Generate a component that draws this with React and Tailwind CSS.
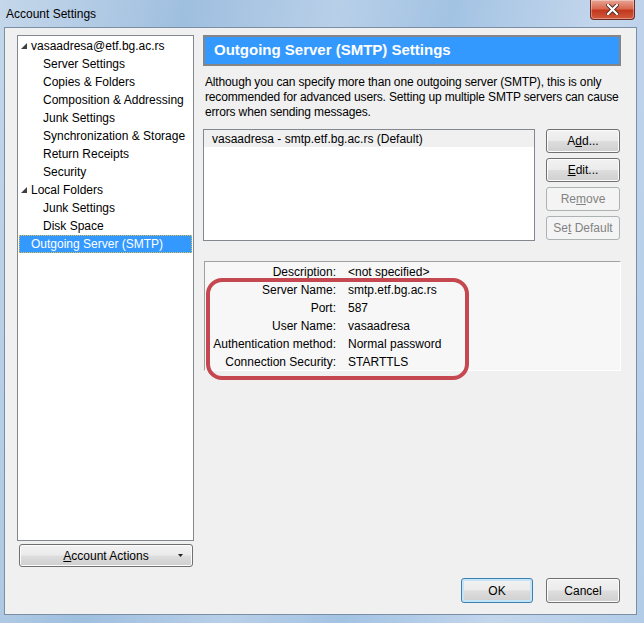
import React from "react";

const font = { fontFamily: '"Liberation Sans", Arial, sans-serif' };

const Tri = () => (
  <svg width="6" height="6" viewBox="0 0 6 6" className="shrink-0">
    <polygon points="6,0 6,6 0,6" fill="#404040" />
  </svg>
);

const TreeRow = ({ level, label, selected }) => (
  <div
    className={
      "h-[18px] flex items-center text-[12px] leading-none " +
      (selected
        ? "bg-[#3399ff] text-white outline-1 outline-dotted outline-[#e0c050] -outline-offset-1"
        : "text-black")
    }
  >
    {level === 0 && (
      <div className="w-[12px] pl-[2px] flex items-center">
        <Tri />
      </div>
    )}
    {level === 2 && <div className="w-[12px]" />}
    {level === 1 && <div className="w-[24px]" />}
    <span>{label}</span>
  </div>
);

const WinButton = ({ children, disabled, className = "" }) => (
  <div
    className={
      "flex items-center justify-center rounded-[3px] border text-[12px] " +
      (disabled
        ? "border-[#adb2b5] bg-[#f4f4f4] text-[#838383] "
        : "border-[#707070] bg-[linear-gradient(#f2f2f2_0%,#ebebeb_48%,#dddddd_52%,#cfcfcf_100%)] text-black shadow-[inset_0_0_0_1px_#fcfcfc] ") +
      className
    }
  >
    {children}
  </div>
);

const tree = [
  [0, "vasaadresa@etf.bg.ac.rs"],
  [1, "Server Settings"],
  [1, "Copies & Folders"],
  [1, "Composition & Addressing"],
  [1, "Junk Settings"],
  [1, "Synchronization & Storage"],
  [1, "Return Receipts"],
  [1, "Security"],
  [0, "Local Folders"],
  [1, "Junk Settings"],
  [1, "Disk Space"],
  [2, "Outgoing Server (SMTP)", true],
];

const details = [
  ["Description:", "<not specified>"],
  ["Server Name:", "smtp.etf.bg.ac.rs"],
  ["Port:", "587"],
  ["User Name:", "vasaadresa"],
  ["Authentication method:", "Normal password"],
  ["Connection Security:", "STARTTLS"],
];

export default function App() {
  return (
    <div
      style={font}
      className="w-[644px] h-[623px] flex flex-col overflow-hidden bg-[linear-gradient(100deg,#c5d7ea_0%,#9fbfdf_25%,#b8cfe8_45%,#a3c3e3_60%,#c3d6ec_80%,#b2cce8_100%)]"
    >
      {/* title bar */}
      <div className="h-[27px] flex items-start relative">
        <span className="pl-[6px] pt-[5px] text-[12px] text-black">Account Settings</span>
        <div className="absolute left-[590px] top-0 w-[45px] h-[20px] rounded-b-[4px] border border-t-0 border-[#6e2a24] bg-[linear-gradient(#e8a595_0%,#d9694f_45%,#c2391e_55%,#d3593c_100%)] flex items-center justify-center shadow-[inset_0_0_0_1px_rgba(255,255,255,0.35)]">
          <svg width="13" height="11" viewBox="0 0 13 11">
            <path d="M2 1 L11 10 M11 1 L2 10" stroke="#4a2a26" strokeWidth="4" strokeLinecap="square" />
            <path d="M2 1 L11 10 M11 1 L2 10" stroke="#ffffff" strokeWidth="2.2" strokeLinecap="square" />
          </svg>
        </div>
      </div>

      <div className="flex-1 flex">
        <div className="w-[4px]" />
        {/* client area */}
        <div className="w-[633px] h-[588px] bg-[#f0f0f0] border border-[#7a8ea5] flex flex-col px-[12px] pt-[7px] pb-[11px] box-border">
          <div className="h-[532px] flex gap-[9px]">
            {/* left column */}
            <div className="w-[177px] flex flex-col gap-[3px]">
              <div className="h-[506px] bg-white border border-[#828790] p-[1px]">
                {tree.map(([lvl, label, sel], i) => (
                  <TreeRow key={i} level={lvl} label={label} selected={sel} />
                ))}
              </div>
              <WinButton className="h-[23px] ml-[2px] w-[174px] relative">
                <span>
                  <span className="underline">A</span>ccount Actions
                </span>
                <svg width="5" height="3" viewBox="0 0 5 3" className="absolute left-[158px] top-[9px]">
                  <polygon points="0,0 5,0 2.5,3" fill="#202020" />
                </svg>
              </WinButton>
            </div>

            {/* right column */}
            <div className="w-[418px] flex flex-col">
              <div className="h-[31px] bg-[#3399ff] border-2 border-[#858585] flex items-center pl-[9px]">
                <span className="text-white font-bold text-[15px]">Outgoing Server (SMTP) Settings</span>
              </div>
              <p className="mt-[9px] pl-[2px] text-[12px] leading-[15px] tracking-[-0.15px] text-black">
                Although you can specify more than one outgoing server (SMTP), this is only recommended for advanced users. Setting up multiple SMTP servers can cause errors when sending messages.
              </p>
              <div className="mt-[9px] flex gap-[11px]">
                <div className="w-[332px] h-[112px] bg-white border border-[#828790]">
                  <div className="h-[17px] bg-[#f0f0f0] flex items-center pl-[8px] text-[12px]">
                    vasaadresa - smtp.etf.bg.ac.rs (Default)
                  </div>
                </div>
                <div className="w-[74px] flex flex-col gap-[5px]">
                  <WinButton className="h-[24px]">
                    <span>
                      A<span className="underline">d</span>d...
                    </span>
                  </WinButton>
                  <WinButton className="h-[24px]">
                    <span>
                      <span className="underline">E</span>dit...
                    </span>
                  </WinButton>
                  <WinButton disabled className="h-[24px]">
                    <span>
                      Re<span className="underline">m</span>ove
                    </span>
                  </WinButton>
                  <WinButton disabled className="h-[24px]">
                    <span>
                      Se<span className="underline">t</span> Default
                    </span>
                  </WinButton>
                </div>
              </div>

              <div className="mt-[20px] ml-[1px] w-[417px] h-[110px] bg-[#f7f7f7] border border-t-[#a0a0a0] border-l-[#a0a0a0] border-r-white border-b-white pt-[1px] relative">
                {details.map(([k, v]) => (
                  <div key={k} className="h-[18px] flex items-center text-[12px]">
                    <span className="w-[131px] text-right">{k}</span>
                    <span className="ml-[12px]">{v}</span>
                  </div>
                ))}
                <div className="absolute left-[1px] top-[16px] w-[263px] h-[102px] rounded-[16px] border-[4px] border-[#c5474f]" />
              </div>
            </div>
          </div>

          <div className="mt-[11px] flex justify-end gap-[13px] pr-[4px]">
            <WinButton className="w-[72px] h-[25px] !border-[#3c7fb1] shadow-[inset_0_0_0_2px_#c4e5f6]">
              OK
            </WinButton>
            <WinButton className="w-[74px] h-[25px]">Cancel</WinButton>
          </div>
        </div>
        <div className="w-[7px]" />
      </div>
      <div className="h-[8px]" />
    </div>
  );
}
